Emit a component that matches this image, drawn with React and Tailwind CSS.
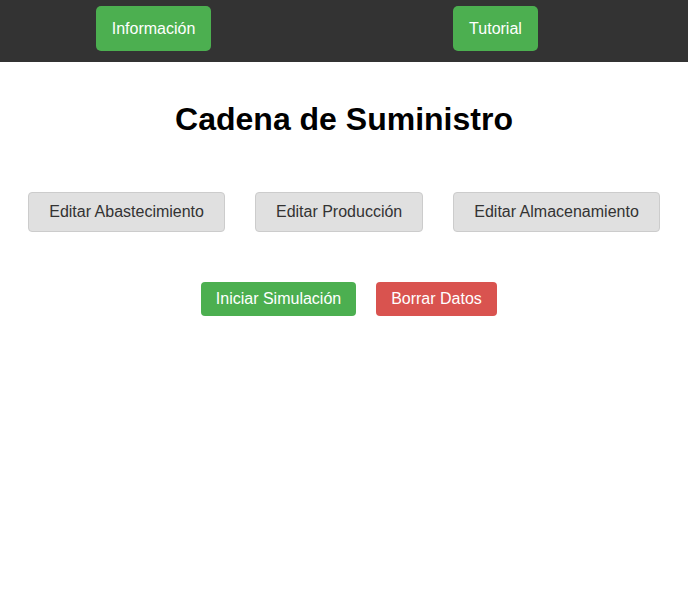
import React from "react";

function App() {
  const editButtons = [
    "Editar Abastecimiento",
    "Editar Producción",
    "Editar Almacenamiento",
  ];

  return (
    <div className="min-h-screen bg-white font-['Liberation_Sans',Arial,sans-serif]">
      <nav className="flex h-[62px] items-start bg-[#333333] pl-[96px] pt-[6px]">
        <button className="h-[45px] w-[115px] rounded-[5px] bg-[#4caf50] text-base text-white">
          Información
        </button>
        <button className="ml-[242px] h-[45px] w-[85px] rounded-[5px] bg-[#4caf50] text-base text-white">
          Tutorial
        </button>
      </nav>

      <h1 className="mt-[39px] text-center text-[32px] font-bold leading-[37px] text-black">
        Cadena de Suministro
      </h1>

      <div className="mt-[54px] flex justify-center gap-[30px]">
        {editButtons.map((label) => (
          <button
            key={label}
            className="h-[40px] rounded-[4px] border border-[#cccccc] bg-[#e0e0e0] px-[20px] text-base text-[#333333]"
          >
            {label}
          </button>
        ))}
      </div>

      <div className="mt-[50px] flex justify-center gap-5 pl-[10px]">
        <button className="h-[34px] w-[155px] rounded-[4px] bg-[#4caf50] text-base text-white">
          Iniciar Simulación
        </button>
        <button className="h-[34px] w-[121px] rounded-[4px] bg-[#d9534f] text-base text-white">
          Borrar Datos
        </button>
      </div>
    </div>
  );
}

export default App;
